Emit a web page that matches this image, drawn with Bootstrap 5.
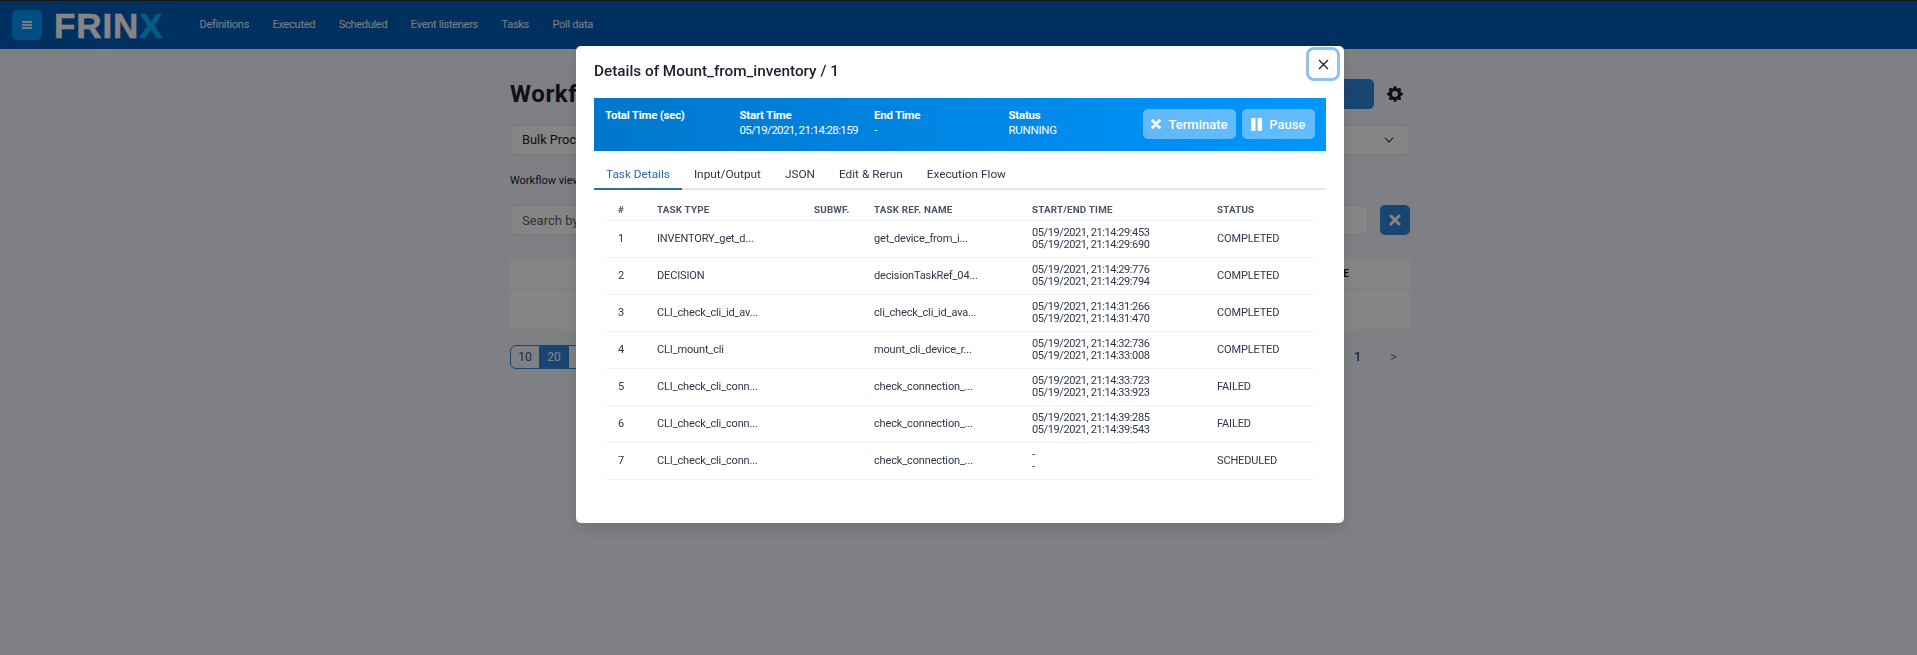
<!DOCTYPE html>
<html lang="en">
<head>
<meta charset="utf-8"/>
<title>Workflows</title>
<link href="https://cdn.jsdelivr.net/npm/bootstrap@5.3.2/dist/css/bootstrap.min.css" rel="stylesheet"/>
<style>
  body { background: #f4f6fc; font-family: Roboto, "Noto Sans", sans-serif; color: #1a202c; height: 655px; overflow: hidden; font-size: 12px; }

  /* top bar */
  .top-bar { height: 49px; background: #005cb9; border-top: 1px solid #2a2a2a; padding: 0 12px; flex-wrap: nowrap; justify-content: flex-start; align-items: center; }
  .menu-btn { width: 30px; height: 30px; background: #0096ff; border: 0; border-radius: 5px; padding: 0; }
  .menu-btn span { display: block; width: 10px; height: 2px; background: #e8ecf2; margin: .5px auto; }
  .brand-text { font-family: "Liberation Sans", sans-serif; font-weight: 700; font-size: 35px; line-height: 1; letter-spacing: .9px; color: #fff; margin: 0 36px 0 12px; padding: 0; -webkit-text-stroke: .5px #fff; }
  .brand-text b { color: #00b4ff; -webkit-text-stroke: .5px #00b4ff; }
  .top-links { gap: 23.500px; flex-direction: row; }
  .top-links .nav-link { color: #f0f4f8; font-size: 11px; padding: 0; letter-spacing: -.28px; }

  /* page behind the dialog */
  .page-wrap { padding-left: 3px; }
  .page-body { width: 900px; margin: 0 auto; }
  .page-head { height: 76px; padding-top: 30px; }
  .page-head h1 { font-size: 24px; font-weight: 700; margin: 0; line-height: 30px; letter-spacing: .6px; }
  .make-btn { width: 112px; height: 30px; background: #2e86da; color: #fff; font-weight: 600; font-size: 14px; border: 0; border-radius: 5px; }
  .gear-icon { margin: 7px 7px 0 13px; }
  .page-select { height: 30px; border-radius: 4px; font-size: 12.800px; padding: 0 11px; border-color: #e2e8f0; background-size: 12px 10px; background-position: right 14px center; }
  .view-line { margin: 18px 0 16px; line-height: 16px; font-size: 11px; }
  .page-search { height: 30px; border-radius: 5px; font-size: 13px; padding: 0 11px; border-color: #e2e8f0; }
  .clear-btn { width: 30px; height: 30px; background: #2e86da; border: 0; border-radius: 5px; color: #fff; padding: 0; flex: none; }
  .page-table { background: #fff; margin-top: 24px; height: 70px; font-size: 10px; font-weight: 700; }
  .page-table > div:first-child { height: 31px; line-height: 30px; text-align: right; padding-right: 61px; border-bottom: 1px solid #e2e8f0; letter-spacing: .02em; }
  .size-group { margin-top: 16px; height: 24px; }
  .size-group .btn { width: 30px; height: 24px; padding: 0; font-size: 12px; border-color: #2e86da; color: #4a5568; background: transparent; }
  .size-group .btn.picked { background: #2e86da; color: #fff; }
  .pager-text { font-size: 13px; gap: 29px; padding-right: 13px; }

  /* dialog */
  .modal-backdrop.show { opacity: .48; }
  .detail-modal { padding-left: 3px; }
  .detail-modal .modal-dialog { max-width: 768px; width: 768px; margin: 46px auto 0; }
  .detail-modal .modal-content { height: 477px; border: 0; border-radius: 5px; box-shadow: 0 7px 14px rgba(0,0,0,.12); }
  .detail-modal .modal-header { height: 52px; padding: 0 18px 2px; border: 0; }
  .detail-modal .modal-title { font-size: 15.300px; font-weight: 500; color: #1a202c; }
  .close-x { position: absolute; top: 4px; right: 7px; width: 28px; height: 28px; background: #fff; border: 0; border-radius: 5px; box-shadow: 0 0 0 3px rgba(66,153,225,.6); padding: 0; display: flex; align-items: center; justify-content: center; }
  .detail-modal .modal-body { padding: 0 18px; }
  .run-banner { height: 53px; background: linear-gradient(90deg, #0077cc, #0096ff); color: #fff; font-size: 11.500px; line-height: 15px; padding: 10px 11px 0; letter-spacing: -.25px; white-space: nowrap; }
  .run-banner .cell { width: 134.500px; }
  .run-banner .cell b { font-weight: 700; display: block; }
  .run-banner .cell span { letter-spacing: -.6px; }
  .run-actions { margin-left: auto; gap: 6px; margin-top: 1px; }
  .run-btn { height: 30px; background: rgba(255,255,255,.38); color: #fff; border: 0; border-radius: 5px; font-size: 13px; font-weight: 500; padding: 0; display: flex; align-items: center; justify-content: center; gap: 7px; }
  .run-btn:nth-child(1) { width: 93px; }
  .run-btn:nth-child(2) { width: 73px; }

  .detail-tabs { height: 39px; border-bottom: 2px solid #e2e8f0; gap: 0; flex-wrap: nowrap; }
  .detail-tabs .nav-link { height: 39px; padding: 0 12px; line-height: 46px; font-size: 11.800px; color: #2d3748; border-radius: 0; border-bottom: 2px solid transparent; }
  .detail-tabs .nav-link.active { color: #2b6cb0; border-bottom-color: #2b6cb0; }

  .task-wrap { padding: 10px 12px 0; }
  .task-table { table-layout: fixed; margin: 0; width: 708px; font-size: 11px; }
  .task-table th { height: 20px; padding: 1px 12px 0; font-size: 9.800px; font-weight: 700; letter-spacing: .02em; text-transform: uppercase; color: #4a5568; border-bottom: 1px solid #edf2f7; vertical-align: middle; white-space: nowrap; }
  .task-table td { height: 37px; padding: 1px 12px 0; line-height: 12px; letter-spacing: -.15px; color: #2d3748; border-bottom: 1px solid #edf2f7; vertical-align: middle; white-space: nowrap; }
  .task-table td.stamp { letter-spacing: -.4px; }
</style>
</head>
<body>

<nav class="navbar top-bar">
  <button class="menu-btn d-flex flex-column justify-content-center" type="button"><span></span><span></span><span></span></button>
  <a class="navbar-brand brand-text" href="#">FRIN<b>X</b></a>
  <ul class="nav top-links">
    <li class="nav-item"><a class="nav-link" href="#">Definitions</a></li>
    <li class="nav-item"><a class="nav-link" href="#">Executed</a></li>
    <li class="nav-item"><a class="nav-link" href="#">Scheduled</a></li>
    <li class="nav-item"><a class="nav-link" href="#">Event listeners</a></li>
    <li class="nav-item"><a class="nav-link" href="#">Tasks</a></li>
    <li class="nav-item"><a class="nav-link" href="#">Poll data</a></li>
  </ul>
</nav>

<div class="page-wrap">
  <div class="page-body">
    <div class="page-head d-flex align-items-start">
      <h1>Workflows</h1>
      <button class="make-btn ms-auto" type="button">+ Create</button>
      <svg class="gear-icon" width="16" height="16" viewBox="0 0 16 16" fill="#1a202c"><path d="M9.405 1.05c-.413-1.4-2.397-1.4-2.81 0l-.1.34a1.464 1.464 0 0 1-2.105.872l-.31-.17c-1.283-.698-2.686.705-1.987 1.987l.169.311c.446.82.023 1.841-.872 2.105l-.34.1c-1.4.413-1.4 2.397 0 2.81l.34.1a1.464 1.464 0 0 1 .872 2.105l-.17.31c-.698 1.283.705 2.686 1.987 1.987l.311-.169a1.464 1.464 0 0 1 2.105.872l.1.34c.413 1.4 2.397 1.4 2.81 0l.1-.34a1.464 1.464 0 0 1 2.105-.872l.31.17c1.283.698 2.686-.705 1.987-1.987l-.169-.311a1.464 1.464 0 0 1 .872-2.105l.34-.1c1.4-.413 1.4-2.397 0-2.81l-.34-.1a1.464 1.464 0 0 1-.872-2.105l.17-.31c.698-1.283-.705-2.686-1.987-1.987l-.311.169a1.464 1.464 0 0 1-2.105-.872l-.1-.34zM8 10.93a2.929 2.929 0 1 1 0-5.86 2.929 2.929 0 0 1 0 5.858z"/></svg>
    </div>
    <select class="form-select page-select"><option>Bulk Processing</option></select>
    <div class="view-line">Workflow view</div>
    <div class="d-flex gap-2">
      <input class="form-control page-search" placeholder="Search by keyword" type="text"/>
      <button class="clear-btn ms-1 d-flex align-items-center justify-content-center" type="button">
        <svg width="12" height="12" viewBox="0 0 12 12"><path d="M2 2l8 8M10 2l-8 8" stroke="#fff" stroke-width="3" stroke-linecap="round"/></svg>
      </button>
    </div>
    <div class="page-table">
      <div>STATE</div>
      <div></div>
    </div>
    <div class="d-flex justify-content-between align-items-center size-group">
      <div class="btn-group">
        <button class="btn" type="button">10</button>
        <button class="btn picked" type="button">20</button>
        <button class="btn" type="button">50</button>
      </div>
      <div class="d-flex pager-text"><span>1</span><span class="text-secondary">&gt;</span></div>
    </div>
  </div>
</div>

<div class="modal-backdrop show"></div>
<div class="modal show d-block detail-modal" tabindex="-1">
  <div class="modal-dialog">
    <div class="modal-content">
      <div class="modal-header">
        <h5 class="modal-title">Details of Mount_from_inventory / 1</h5>
        <button class="close-x" type="button" aria-label="Close">
          <svg width="11" height="11" viewBox="0 0 11 11"><path d="M1 1l9 9M10 1l-9 9" stroke="#1a202c" stroke-width="1.3"/></svg>
        </button>
      </div>
      <div class="modal-body">
        <div class="run-banner d-flex">
          <div class="cell"><b>Total Time (sec)</b></div>
          <div class="cell"><b>Start Time</b><span>05/19/2021, 21:14:28:159</span></div>
          <div class="cell"><b>End Time</b>-</div>
          <div class="cell"><b>Status</b>RUNNING</div>
          <div class="run-actions d-flex">
            <button class="run-btn" type="button"><svg width="10" height="10" viewBox="0 0 10 10"><path d="M1.500 1.500l7 7M8.500 1.500l-7 7" stroke="#fff" stroke-width="2.800" stroke-linecap="round"/></svg>Terminate</button>
            <button class="run-btn" type="button"><svg width="11" height="13" viewBox="0 0 11 13" fill="#fff"><rect x="0" y="0" width="4.500" height="13" rx="1"/><rect x="6.500" y="0" width="4.500" height="13" rx="1"/></svg>Pause</button>
          </div>
        </div>
        <ul class="nav detail-tabs">
          <li class="nav-item"><a class="nav-link active" href="#">Task Details</a></li>
          <li class="nav-item"><a class="nav-link" href="#">Input/Output</a></li>
          <li class="nav-item"><a class="nav-link" href="#">JSON</a></li>
          <li class="nav-item"><a class="nav-link" href="#">Edit &amp; Rerun</a></li>
          <li class="nav-item"><a class="nav-link" href="#">Execution Flow</a></li>
        </ul>
        <div class="task-wrap">
          <table class="table task-table">
            <colgroup><col width="39"/><col width="157"/><col width="60"/><col width="158"/><col width="185"/><col width="109"/></colgroup>
            <thead>
              <tr><th>#</th><th>Task Type</th><th>Subwf.</th><th>Task Ref. Name</th><th>Start/End Time</th><th>Status</th></tr>
            </thead>
            <tbody>
              <tr><td>1</td><td>INVENTORY_get_d...</td><td></td><td>get_device_from_i...</td><td class="stamp">05/19/2021, 21:14:29:453<br/>05/19/2021, 21:14:29:690</td><td>COMPLETED</td></tr>
              <tr><td>2</td><td>DECISION</td><td></td><td>decisionTaskRef_04...</td><td class="stamp">05/19/2021, 21:14:29:776<br/>05/19/2021, 21:14:29:794</td><td>COMPLETED</td></tr>
              <tr><td>3</td><td>CLI_check_cli_id_av...</td><td></td><td>cli_check_cli_id_ava...</td><td class="stamp">05/19/2021, 21:14:31:266<br/>05/19/2021, 21:14:31:470</td><td>COMPLETED</td></tr>
              <tr><td>4</td><td>CLI_mount_cli</td><td></td><td>mount_cli_device_r...</td><td class="stamp">05/19/2021, 21:14:32:736<br/>05/19/2021, 21:14:33:008</td><td>COMPLETED</td></tr>
              <tr><td>5</td><td>CLI_check_cli_conn...</td><td></td><td>check_connection_...</td><td class="stamp">05/19/2021, 21:14:33:723<br/>05/19/2021, 21:14:33:923</td><td>FAILED</td></tr>
              <tr><td>6</td><td>CLI_check_cli_conn...</td><td></td><td>check_connection_...</td><td class="stamp">05/19/2021, 21:14:39:285<br/>05/19/2021, 21:14:39:543</td><td>FAILED</td></tr>
              <tr><td>7</td><td>CLI_check_cli_conn...</td><td></td><td>check_connection_...</td><td>-<br/>-</td><td>SCHEDULED</td></tr>
            </tbody>
          </table>
        </div>
      </div>
    </div>
  </div>
</div>

<script src="https://cdn.jsdelivr.net/npm/bootstrap@5.3.2/dist/js/bootstrap.bundle.min.js"></script>
</body>
</html>
